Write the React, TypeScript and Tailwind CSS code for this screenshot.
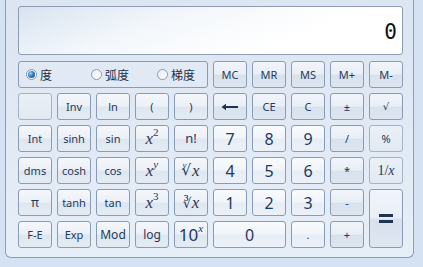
import React from "react";

const btnBase =
  "flex items-center justify-center rounded-[3px] border text-[#1e3a5c] select-none leading-none";
const fnBtn =
  btnBase +
  " border-[#8a9cb4] bg-[linear-gradient(to_bottom,#f4f7fb_0%,#ecf1f7_48%,#dee6f0_52%,#e4ebf3_100%)]";
const numBtn =
  btnBase +
  " border-[#8a9cb4] bg-[linear-gradient(to_bottom,#f8fafd_0%,#f1f5fa_48%,#e7edf5_52%,#ecf1f8_100%)]";
const opBtn =
  btnBase +
  " border-[#8a9cb4] bg-[linear-gradient(to_bottom,#f1f5fa_0%,#e9eff6_48%,#d8e1ec_52%,#dee6f0_100%)]";
const flatBtn =
  btnBase + " border-[#a3b2c5] bg-[linear-gradient(to_bottom,#eaf0f6_0%,#e2e9f2_100%)]";

const sans = "font-['Noto_Sans','Noto_Sans_CJK_SC',sans-serif]";
const serif = "font-['Liberation_Serif','DejaVu_Serif',serif]";

function Radio({ checked, label, width }: { checked?: boolean; label: string; width: string }) {
  return (
    <div className={"flex items-center " + width}>
      <span className="flex h-[11px] w-[11px] items-center justify-center rounded-full border border-[#8d9bad] bg-[linear-gradient(135deg,#e8ecf1,#ffffff)]">
        {checked ? (
          <span className="h-[7px] w-[7px] rounded-full bg-[radial-gradient(circle_at_35%_35%,#9fd0f5_0%,#2f7fc4_45%,#15457a_100%)]" />
        ) : null}
      </span>
      <span className="ml-[3px] text-[12px] text-[#1e2f45] font-['Noto_Sans_CJK_SC',sans-serif]">{label}</span>
    </div>
  );
}

export default function App() {
  return (
    <div className={"flex h-[267px] w-[423px] bg-[#d4e2f3] pl-[5px] pr-[9px] pb-[9px] " + sans}>
      <div className="flex flex-1 flex-col rounded-b-[6px] border-x border-b border-[#8d9db3] bg-[linear-gradient(to_bottom,#dbe6f2_0%,#e2eaf5_60%,#e6eef8_100%)] pl-[12px] pt-[6px]">
        <div className="flex h-[49px] w-[385px] items-end justify-end rounded-[3px] border border-[#8e9db1] bg-[linear-gradient(160deg,#d8e3f0_0%,#f3f7fb_35%,#ffffff_70%)] pb-[11px] pr-[5px]">
          <span className="text-[21px] leading-none text-[#111] font-['DejaVu_Sans_Mono',monospace]">0</span>
        </div>
        <div className="mt-[6px] grid grid-cols-[repeat(10,34px)] grid-rows-[repeat(6,27px)] gap-[5px]">
          <div className="col-span-5 flex items-center rounded-[3px] border border-[#8a9cb4] bg-[#e0e9f4] pl-[7px]">
            <Radio checked label="度" width="w-[65px]" />
            <Radio label="弧度" width="w-[66px]" />
            <Radio label="梯度" width="w-[50px]" />
          </div>
          <div className={opBtn + " text-[11px]"}>MC</div>
          <div className={opBtn + " text-[11px]"}>MR</div>
          <div className={opBtn + " text-[11px]"}>MS</div>
          <div className={opBtn + " text-[11px]"}>M+</div>
          <div className={opBtn + " text-[11px]"}>M-</div>

          <div className={flatBtn}></div>
          <div className={fnBtn + " text-[11px]"}>Inv</div>
          <div className={fnBtn + " text-[11px]"}>ln</div>
          <div className={fnBtn + " text-[11px]"}>(</div>
          <div className={fnBtn + " text-[11px]"}>)</div>
          <div className={opBtn}>
            <svg width="18" height="8" viewBox="0 0 18 8">
              <path d="M4 4 H17" stroke="#1e3350" strokeWidth="2" />
              <path d="M0.5 4 L5 0.8 L5 7.2 Z" fill="#1e3350" />
            </svg>
          </div>
          <div className={opBtn + " text-[11px]"}>CE</div>
          <div className={opBtn + " text-[11px]"}>C</div>
          <div className={opBtn + " text-[11px]"}>±</div>
          <div className={opBtn}>
            <span className="text-[10px] font-['DejaVu_Sans',sans-serif]">√</span>
          </div>

          <div className={fnBtn + " text-[11px]"}>Int</div>
          <div className={fnBtn + " text-[11px]"}>sinh</div>
          <div className={fnBtn + " text-[11px]"}>sin</div>
          <div className={fnBtn}>
            <span className={serif + " text-[17px] italic"}>x</span>
            <span className={serif + " relative -top-[6px] text-[11px]"}>2</span>
          </div>
          <div className={fnBtn + " text-[13px]"}>n!</div>
          <div className={numBtn + " text-[16px]"}>7</div>
          <div className={numBtn + " text-[16px]"}>8</div>
          <div className={numBtn + " text-[16px]"}>9</div>
          <div className={opBtn + " text-[11px]"}>/</div>
          <div className={flatBtn + " text-[11px]"}>%</div>

          <div className={fnBtn + " text-[11px]"}>dms</div>
          <div className={fnBtn + " text-[11px]"}>cosh</div>
          <div className={fnBtn + " text-[11px]"}>cos</div>
          <div className={fnBtn}>
            <span className={serif + " text-[17px] italic"}>x</span>
            <span className={serif + " relative -top-[6px] text-[11px] italic"}>y</span>
          </div>
          <div className={fnBtn}>
            <span className={serif + " relative -top-[5px] -mr-[5px] text-[9px] italic"}>y</span>
            <span className={"font-['DejaVu_Serif',serif] text-[15px]"}>√</span>
            <span className={serif + " ml-[1px] text-[17px] italic"}>x</span>
          </div>
          <div className={numBtn + " text-[16px]"}>4</div>
          <div className={numBtn + " text-[16px]"}>5</div>
          <div className={numBtn + " text-[16px]"}>6</div>
          <div className={opBtn + " text-[11px]"}>*</div>
          <div className={flatBtn}>
            <span className={serif + " text-[14px]"}>1/</span>
            <span className={serif + " text-[14px] italic"}>x</span>
          </div>

          <div className={fnBtn + " text-[12px]"}>π</div>
          <div className={fnBtn + " text-[11px]"}>tanh</div>
          <div className={fnBtn + " text-[11px]"}>tan</div>
          <div className={fnBtn}>
            <span className={serif + " text-[17px] italic"}>x</span>
            <span className={serif + " relative -top-[6px] text-[11px]"}>3</span>
          </div>
          <div className={fnBtn}>
            <span className={"font-['DejaVu_Serif',serif] text-[14px]"}>∛</span>
            <span className={serif + " text-[17px] italic"}>x</span>
          </div>
          <div className={numBtn + " text-[16px]"}>1</div>
          <div className={numBtn + " text-[16px]"}>2</div>
          <div className={numBtn + " text-[16px]"}>3</div>
          <div className={opBtn + " text-[11px]"}>-</div>
          <div className={opBtn + " row-span-2"}>
            <svg width="14" height="9" viewBox="0 0 14 9">
              <rect x="0" y="0" width="14" height="3" fill="#1e3350" />
              <rect x="0" y="6" width="14" height="3" fill="#1e3350" />
            </svg>
          </div>

          <div className={fnBtn + " text-[11px]"}>F-E</div>
          <div className={fnBtn + " text-[11px]"}>Exp</div>
          <div className={fnBtn + " text-[12px]"}>Mod</div>
          <div className={fnBtn + " text-[12px]"}>log</div>
          <div className={fnBtn}>
            <span className="text-[17px] font-['Noto_Sans',sans-serif]">10</span>
            <span className={serif + " relative -top-[6px] text-[11px] italic"}>x</span>
          </div>
          <div className={numBtn + " col-span-2 text-[16px]"}>0</div>
          <div className={numBtn + " text-[11px]"}>.</div>
          <div className={opBtn + " text-[11px]"}>+</div>
        </div>
      </div>
    </div>
  );
}
